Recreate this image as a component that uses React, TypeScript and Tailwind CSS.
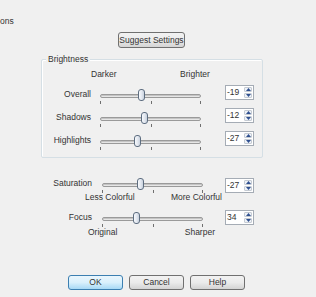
import React from "react";

const font = { fontFamily: '"Liberation Sans", Arial, sans-serif' };

function Slider({ thumb, width = 102 }: { thumb: number; width?: number }) {
  return (
    <div className="relative h-[15px] shrink-0" style={{ width }}>
      {/* track */}
      <div className="absolute left-0 right-0 top-[5px] h-[4px] rounded-full border border-[#9a9a9a] bg-[#e6e6e6] shadow-[inset_0_1px_0_#c4c4c4]" />
      {/* ticks */}
      <div className="absolute left-0 top-[12px] h-[3px] w-px bg-[#6f6f6f]" />
      <div className="absolute left-1/2 top-[12px] h-[3px] w-px bg-[#6f6f6f]" />
      <div className="absolute right-0 top-[12px] h-[3px] w-px bg-[#6f6f6f]" />
      {/* thumb */}
      <div
        className="absolute top-0 h-[12px] w-[7px] rounded-[3px] border border-[#5d6d80] bg-gradient-to-r from-[#f7f9fc] via-[#e4e9f1] to-[#c9d2de]"
        style={{ left: thumb }}
      />
    </div>
  );
}

function Spin({ value }: { value: string }) {
  return (
    <div className="flex h-[15px] w-[29px] shrink-0 items-stretch border border-[#a5acb5] bg-white">
      <span className="flex-1 pl-[1px] text-[8.5px] leading-[13px] text-[#333]">{value}</span>
      <div className="my-[1px] mr-[1px] flex w-[8px] flex-col gap-px">
        <div className="flex flex-1 items-center justify-center rounded-[1px] border border-[#c5cbd3] bg-[#eef2f7]">
          <svg width="5" height="3" viewBox="0 0 5 3">
            <path d="M0 3 L2.5 0 L5 3 Z" fill="#2f4f8f" />
          </svg>
        </div>
        <div className="flex flex-1 items-center justify-center rounded-[1px] border border-[#c5cbd3] bg-[#eef2f7]">
          <svg width="5" height="3" viewBox="0 0 5 3">
            <path d="M0 0 L2.5 3 L5 0 Z" fill="#2f4f8f" />
          </svg>
        </div>
      </div>
    </div>
  );
}

function BoxRow({ label, thumb, value }: { label: string; thumb: number; value: string }) {
  return (
    <div className="flex h-[23px] items-start">
      <span className="mt-[6px] w-[49px] text-right leading-[10px]">{label}</span>
      <div className="ml-[9px] mt-[6px]">
        <Slider thumb={thumb} width={101} />
      </div>
      <div className="ml-[24px] mt-[2px]">
        <Spin value={value} />
      </div>
    </div>
  );
}

function WinButton({ children, primary = false, className = "" }: { children: React.ReactNode; primary?: boolean; className?: string }) {
  return (
    <button
      type="button"
      className={
        "h-[15px] rounded-[3px] border text-[8.5px] leading-[13px] text-[#333] " +
        (primary
          ? "border-[#3c7fb1] bg-gradient-to-b from-[#eaf6fd] via-[#d9f0fc] to-[#a7d9f5] "
          : "border-[#707070] bg-gradient-to-b from-[#f2f2f2] via-[#ebebeb] to-[#d4d4d4] ") +
        className
      }
    >
      {children}
    </button>
  );
}

export default function App() {
  return (
    <div className="flex h-[297px] w-[316px] flex-col overflow-hidden bg-[#f0f0f0] text-[8.5px] text-[#333]" style={font}>
      <div className="pt-[16px] leading-[10px]">ons</div>

      <div className="mt-[6px] pl-[118px]">
        <WinButton className="h-[16px] w-[67px]">Suggest Settings</WinButton>
      </div>

      {/* Brightness group */}
      <div className="relative ml-[41px] mt-[11px] h-[99px] w-[222px] rounded-[2px] border border-[#d5dfe5] shadow-[inset_1px_1px_0_#ffffff]">
        <span className="absolute left-[4px] top-[-6px] bg-[#f0f0f0] px-[2px] leading-[10px]">Brightness</span>
        <div className="flex pt-[9px] leading-[10px]">
          <span className="ml-[49px] w-[24px] text-center">Darker</span>
          <span className="ml-[63px] w-[34px] text-center">Brighter</span>
        </div>
        <div className="mt-[4px]">
          <BoxRow label="Overall" thumb={38} value="-19" />
          <BoxRow label="Shadows" thumb={41} value="-12" />
          <BoxRow label="Highlights" thumb={34} value="-27" />
        </div>
      </div>

      {/* Saturation */}
      <div className="ml-[41px] mt-[20px] flex h-[14px] items-start">
        <span className="w-[51px] text-right leading-[10px]">Saturation</span>
        <div className="ml-[10px]">
          <Slider thumb={35} width={101} />
        </div>
        <div className="ml-[22px]">
          <Spin value="-27" />
        </div>
      </div>
      <div className="ml-[85px] flex w-[137px] justify-between leading-[10px]">
        <span>Less Colorful</span>
        <span>More Colorful</span>
      </div>

      {/* Focus */}
      <div className="ml-[41px] mt-[8px] flex h-[17px] items-start">
        <span className="mt-[2px] w-[51px] text-right leading-[10px]">Focus</span>
        <div className="ml-[10px] mt-[2px]">
          <Slider thumb={31} width={101} />
        </div>
        <div className="ml-[22px]">
          <Spin value="34" />
        </div>
      </div>
      <div className="ml-[88px] flex w-[127px] justify-between leading-[10px]">
        <span>Original</span>
        <span>Sharper</span>
      </div>

      <div className="ml-[68px] mt-[38px] flex gap-[6px]">
        <WinButton primary className="w-[55px]">OK</WinButton>
        <WinButton className="w-[55px]">Cancel</WinButton>
        <WinButton className="w-[55px]">Help</WinButton>
      </div>
    </div>
  );
}
